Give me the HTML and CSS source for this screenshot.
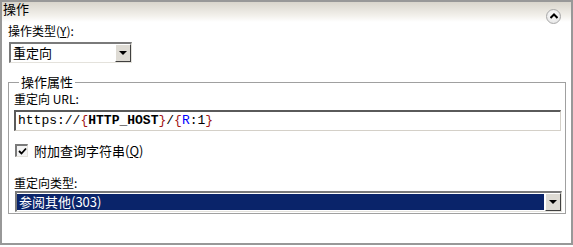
FILE: index.html
```html
<!DOCTYPE html>
<html lang="zh-CN">
<head>
  <meta charset="UTF-8">
  <title>操作</title>
  <link rel="stylesheet" href="styles.css">
</head>
<body>
  <div class="panel">
    <div class="panel-header">
      <span class="panel-title">操作</span>
      <span class="collapse">
        <svg width="8" height="6" viewBox="0 0 8 6"><path d="M0.5 5 L4 1.5 L7.5 5" fill="none" stroke="#000" stroke-width="2"/></svg>
      </span>
    </div>

    <div class="panel-body">
      <label class="label">操作类型(<u>Y</u>):</label>
      <div class="combo small">
        <span class="combo-value">重定向</span>
        <span class="combo-btn"><span class="arrow"></span></span>
      </div>

      <fieldset class="group">
        <legend>操作属性</legend>
        <label class="label">重定向 URL:</label>
        <div class="textbox">https://<span class="brace">{</span><b>HTTP_HOST</b><span class="brace">}</span>/<span class="brace">{</span><span class="var">R</span>:1<span class="brace">}</span></div>

        <div class="check-row">
          <span class="checkbox">
            <svg width="9" height="9" viewBox="0 0 9 9"><path d="M1 4 L3.5 6.5 L8 1.5" fill="none" stroke="#000" stroke-width="1.8"/></svg>
          </span>
          <span>附加查询字符串(<u>Q</u>)</span>
        </div>

        <label class="label">重定向类型:</label>
        <div class="combo wide selected">
          <span class="combo-value">参阅其他(303)</span>
          <span class="combo-btn"><span class="arrow"></span></span>
        </div>
      </fieldset>
    </div>
  </div>
</body>
</html>
```

FILE: styles.css
```css
body {
  margin: 0;
  padding: 0;
  background-color: #ffffff;
  font-family: "Noto Sans CJK SC", "Liberation Sans", sans-serif;
  font-size: 12px;
  color: #000000;
}

.panel {
  width: 573px;
  height: 245px;
  box-sizing: border-box;
  border: 2px solid #989898;
  background-color: #ffffff;
}

.panel-header {
  display: flex;
  justify-content: space-between;
  align-items: center;
  height: 20px;
  padding: 0 10px 0 1px;
  background: linear-gradient(#d9d5cc, #f3f1ec 70%, #ffffff);
}

.panel-title {
  font-size: 13px;
  line-height: 16px;
  margin-top: -6px;
}

.collapse {
  display: flex;
  align-items: center;
  justify-content: center;
  width: 13px;
  height: 13px;
  margin-top: 8px;
  border: 1px solid #a8a8a8;
  border-radius: 50%;
  background: radial-gradient(circle at 50% 40%, #ffffff, #e0e0e0);
}

.panel-body {
  padding: 0 4px 0 6px;
}

.label {
  display: block;
  line-height: 16px;
}

.panel-body > .label {
  margin-top: 1px;
}

.combo {
  display: flex;
  align-items: stretch;
  box-sizing: border-box;
  height: 21px;
  border-top: 2px solid #7a7a7a;
  border-left: 2px solid #7a7a7a;
  border-right: 1px solid #e4e2dc;
  border-bottom: 1px solid #e4e2dc;
  background-color: #ffffff;
}

.combo.small {
  width: 123px;
  margin: 3px 0 0 1px;
}

.combo.wide {
  width: 547px;
  margin-left: 1px;
}

.combo-value {
  flex: 1;
  padding-left: 2px;
  line-height: 18px;
  font-size: 13px;
}

.combo.selected .combo-value {
  background-color: #0a246a;
  color: #ffffff;
  margin: 1px 1px 1px 0;
  line-height: 16px;
}

.combo-btn {
  display: flex;
  align-items: center;
  justify-content: center;
  width: 16px;
  box-sizing: border-box;
  background-color: #dedbd4;
  border-top: 1px solid #ffffff;
  border-left: 1px solid #ffffff;
  border-right: 1px solid #404040;
  border-bottom: 1px solid #404040;
}

.arrow {
  width: 0;
  height: 0;
  border-left: 4px solid transparent;
  border-right: 4px solid transparent;
  border-top: 4px solid #000000;
}

.group {
  margin: 12px 5px 0 0;
  padding: 0 3px 18px 5px;
  height: 139px;
  box-sizing: border-box;
  border: 1px solid #a0a0a0;
}

.group legend {
  padding: 0 2px;
  margin-left: 5px;
  font-size: 13px;
  line-height: 14px;
}

.group .label {
  margin-top: 2px;
}

.textbox {
  box-sizing: border-box;
  width: 547px;
  height: 21px;
  margin-top: 3px;
  padding-left: 2px;
  border-top: 2px solid #5a5a5a;
  border-left: 2px solid #5a5a5a;
  border-right: 1px solid #d4d0c8;
  border-bottom: 1px solid #d4d0c8;
  font-family: "Liberation Mono", monospace;
  font-size: 13px;
  line-height: 17px;
  white-space: nowrap;
}

.brace {
  color: #a31515;
}

.var {
  color: #0000ff;
}

.check-row {
  display: flex;
  align-items: center;
  gap: 6px;
  margin: 10px 0 15px 1px;
  font-size: 13px;
}

.checkbox {
  display: flex;
  align-items: center;
  justify-content: center;
  width: 13px;
  height: 13px;
  box-sizing: border-box;
  border-top: 2px solid #7a7a7a;
  border-left: 2px solid #7a7a7a;
  border-right: 1px solid #e4e2dc;
  border-bottom: 1px solid #e4e2dc;
  background-color: #f4f4f4;
}
```
